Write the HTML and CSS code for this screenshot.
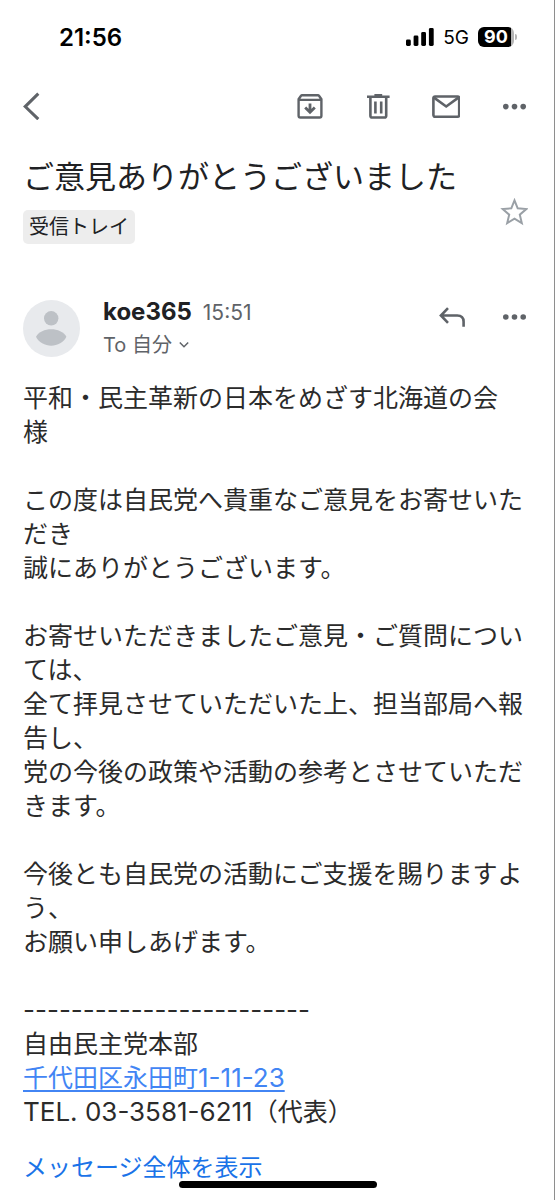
FILE: index.html
```
<!DOCTYPE html>
<html lang="ja">
<head>
    <meta charset="UTF-8">
    <meta name="viewport" content="width=device-width, initial-scale=1">
    <title>ご意見ありがとうございました</title>
    <link rel="stylesheet" href="styles.css">
</head>
<body>
    <div class="status-bar">
        <span class="clock">21:56</span>
        <div class="status-icons">
            <svg class="signal" viewBox="0 0 28 18" aria-hidden="true">
                <rect x="0" y="11.5" width="4.8" height="6.5" rx="1.4"/>
                <rect x="7.6" y="7.5" width="4.8" height="10.5" rx="1.4"/>
                <rect x="15.2" y="4" width="4.8" height="14" rx="1.4"/>
                <rect x="22.9" y="0" width="4.8" height="18" rx="1.4"/>
            </svg>
            <span class="network">5G</span>
            <span class="battery">90</span>
        </div>
    </div>

    <nav class="toolbar">
        <button class="icon-button" aria-label="戻る">
            <svg viewBox="0 0 28 28"><path d="M15.3 1.6 2.2 14.6l13.1 12.6" stroke-width="3"/></svg>
        </button>
        <div class="actions">
            <button class="icon-button" aria-label="アーカイブ">
                <svg viewBox="0 0 28 28">
                    <path d="M2.6 7.2 5 3.7q.4-.5 1-.5h16q.6 0 1 .5l2.4 3.5v16.5q0 1.8-1.8 1.8H4.4q-1.8 0-1.8-1.8zM2.6 7.9h22.8"/>
                    <path d="M14 11.5v8.500M9.200 15.400l4.800 4.800 4.800-4.800" stroke-width="2.8"/>
                </svg>
            </button>
            <button class="icon-button" aria-label="削除">
                <svg viewBox="0 0 28 28">
                    <path d="M3 4.7h22.6M10.4 3.2h7.8M6.4 5v18.7q0 1.8 1.8 1.8h12.2q1.8 0 1.8-1.8V5M11.4 9.4v12.2M17.2 9.4v12.2" stroke-width="2.6"/>
                </svg>
            </button>
            <button class="icon-button" aria-label="未読にする">
                <svg viewBox="0 0 28 28">
                    <rect x="1.4" y="4.5" width="25.8" height="20.2" rx="1.6" stroke-width="2.6"/>
                    <path d="M2 5.6l12.2 8.900L26.400 5.600" stroke-width="2.6"/>
                </svg>
            </button>
            <button class="icon-button" aria-label="その他">
                <svg class="dots" viewBox="0 0 28 28">
                    <circle cx="5.8" cy="14.6" r="2.8"/>
                    <circle cx="14.5" cy="14.6" r="2.8"/>
                    <circle cx="23.2" cy="14.6" r="2.8"/>
                </svg>
            </button>
        </div>
    </nav>

    <main>
        <header class="subject">
            <div>
                <h1>ご意見ありがとうございました</h1>
                <span class="label">受信トレイ</span>
            </div>
            <button class="icon-button star" aria-label="スターを付ける">
                <svg viewBox="0 0 28 28">
                    <path d="M14.5 2.4l3.2 7.9 8.6.8-6.500 5.600 2 8.400-7.300-4.400-7.300 4.400 2-8.400-6.500-5.600 8.600-.8z" stroke-width="2"/>
                </svg>
            </button>
        </header>

        <section class="sender">
            <svg class="avatar" viewBox="0 0 57 57" aria-hidden="true">
                <circle cx="28.5" cy="28.5" r="28.5" fill="#e8eaed"/>
                <circle cx="28.2" cy="18.3" r="7.2" fill="#bdc1c6"/>
                <path d="M13 36.8C15.5 31.8 22 29.3 28.2 29.3s12.7 2.5 15.2 7.5c-2.5 5.5-9 9-15.2 9S15.5 42.3 13 36.8z" fill="#bdc1c6"/>
            </svg>
            <div class="sender-info">
                <div class="sender-line">
                    <span class="name">koe365</span>
                    <time class="time">15:51</time>
                </div>
                <button class="recipient">To 自分
                    <svg viewBox="0 0 12 12"><path d="M1.8 3.5 6 7.7l4.200-4.200"/></svg>
                </button>
            </div>
            <button class="icon-button" aria-label="返信">
                <svg viewBox="0 0 28 28">
                    <path d="M10 5.200 2.900 12.500l7.100 7.300M3.200 12.500h16q6.400 0 6.400 6.300v5" stroke-width="2.6"/>
                </svg>
            </button>
            <button class="icon-button" aria-label="その他">
                <svg class="dots" viewBox="0 0 28 28">
                    <circle cx="5.8" cy="14" r="2.8"/>
                    <circle cx="14.5" cy="14" r="2.8"/>
                    <circle cx="23.2" cy="14" r="2.8"/>
                </svg>
            </button>
        </section>

        <article class="message">
            <p>平和・民主革新の日本をめざす北海道の会<br>様</p>
            <p>この度は自民党へ貴重なご意見をお寄せいただき<br>誠にありがとうございます。</p>
            <p>お寄せいただきましたご意見・ご質問については、<br>全て拝見させていただいた上、担当部局へ報告し、<br>党の今後の政策や活動の参考とさせていただきます。</p>
            <p>今後とも自民党の活動にご支援を賜りますよう、<br>お願い申しあげます。</p>
            <p><span class="latin">------------------------</span><br>自由民主党本部<br><a href="#">千代田区永田町<span class="latin">1-11-23</span></a><br><span class="latin">TEL. 03-3581-6211</span>（代表）</p>
        </article>

        <a class="show-all" href="#">メッセージ全体を表示</a>
    </main>

    <div class="home-indicator"></div>
</body>
</html>
```

FILE: styles.css
```
* {
    box-sizing: border-box;
}

body {
    margin: 0;
    min-height: 100vh;
    background: #fff;
    border-right: 1px solid #8e8e8e;
    color: #2b2b2b;
    font-family: Inter, "Noto Sans CJK JP", sans-serif;
    overflow: hidden;
}

h1, p {
    margin: 0;
}

button {
    padding: 0;
    border: none;
    background: none;
    font-family: inherit;
    cursor: pointer;
}

/* Status bar */
.status-bar {
    display: flex;
    align-items: center;
    justify-content: space-between;
    height: 74px;
    padding: 0 40px 0 59px;
    color: #000;
}

.clock {
    font-size: 24px;
    font-weight: 600;
}

.status-icons {
    display: flex;
    align-items: center;
}

.signal {
    width: 28px;
    height: 18px;
    margin-right: 9px;
}

.network {
    margin-right: 9px;
    font-size: 19px;
    font-weight: 400;
}

.battery {
    position: relative;
    width: 36px;
    height: 20px;
    border-radius: 6px;
    background: linear-gradient(to right, #000 33px, #b5b5b5 33px);
    color: #fff;
    font-size: 18px;
    font-weight: 700;
    line-height: 20px;
    text-align: center;
}

.battery::after {
    content: "";
    position: absolute;
    top: 7px;
    right: -3px;
    width: 2px;
    height: 6px;
    border-radius: 0 2px 2px 0;
    background: #b5b5b5;
}

/* Toolbar */
.toolbar {
    display: flex;
    align-items: center;
    justify-content: space-between;
    height: 64px;
    padding: 0 26px 0 23px;
}

.actions {
    display: flex;
    gap: 40px;
}

.icon-button {
    flex: none;
    width: 28px;
    height: 28px;
    color: #5f6368;
}

.icon-button svg {
    display: block;
    width: 28px;
    height: 28px;
    fill: none;
    stroke: currentColor;
    stroke-width: 2.4;
}

.icon-button .dots {
    fill: currentColor;
    stroke: none;
}

/* Subject */
main {
    padding: 15px 23px 0;
}

.subject {
    display: flex;
    justify-content: space-between;
    align-items: flex-end;
    padding-right: 3px;
}

h1 {
    color: #202124;
    font-size: 31px;
    font-weight: 400;
    line-height: 48px;
}

.label {
    display: block;
    width: fit-content;
    margin-top: 9px;
    padding: 0 6px;
    border-radius: 5px;
    background: #ededed;
    color: #202124;
    font-size: 20px;
    line-height: 34px;
}

.star {
    margin-bottom: 18px;
    color: #9aa0a6;
}

/* Sender */
.sender {
    display: flex;
    align-items: flex-start;
    gap: 34px;
    margin-top: 54px;
    padding-right: 3px;
}

.avatar {
    flex: none;
    width: 57px;
    height: 57px;
    margin: 2px -11px 0 0;
}

.sender-info {
    flex: 1;
}

.sender-line {
    display: flex;
    align-items: baseline;
    gap: 11px;
    line-height: 28px;
}

.name {
    color: #202124;
    font-size: 24px;
    font-weight: 700;
}

.time {
    color: #5f6368;
    font-size: 21px;
}

.recipient {
    display: flex;
    align-items: center;
    gap: 6px;
    color: #5f6368;
    font-size: 20px;
    line-height: 36px;
}

.recipient svg {
    width: 12px;
    height: 12px;
    fill: none;
    stroke: currentColor;
    stroke-width: 1.5;
}

.sender .icon-button {
    margin-top: 5px;
}

/* Message */
.message {
    margin-top: 18px;
    font-size: 25px;
    line-height: 34px;
}

.message p + p {
    margin-top: 34px;
}

.message a {
    color: #4285f4;
    text-underline-offset: 3px;
}

.latin {
    font-size: 26px;
}

.show-all {
    display: block;
    margin-top: 22px;
    color: #1a73e8;
    font-size: 24px;
    line-height: 34px;
    text-decoration: none;
}

.home-indicator {
    position: fixed;
    bottom: 12px;
    left: 50%;
    width: 198px;
    height: 7px;
    border-radius: 4px;
    background: #000;
    transform: translateX(-50%);
}
```
